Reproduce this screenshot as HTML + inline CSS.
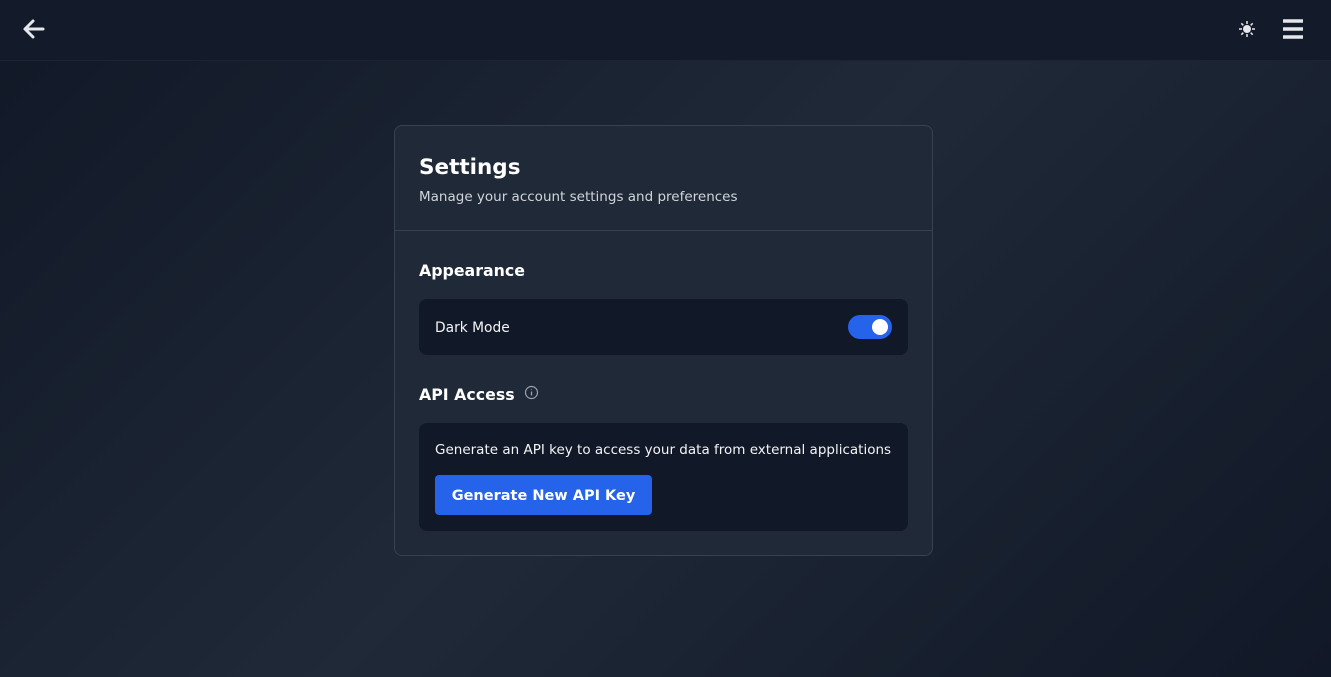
<!DOCTYPE html>
<html><head><style>
*{box-sizing:border-box;margin:0;padding:0}
body{width:1331px;height:677px;overflow:hidden;font-family:"DejaVu Sans","Liberation Sans",sans-serif;background:linear-gradient(135deg,#111827 0%,#1f2937 50%,#111827 100%);color:#f3f4f6;position:relative}
.top{position:absolute;left:0;top:0;width:1331px;height:61px;background:#131a29;border-bottom:1px solid #1c2433}
.card{position:absolute;left:394px;top:125px;width:539px;height:431px;background:#1f2937;border:1px solid #374151;border-radius:8px}
h1{position:absolute;left:24px;top:29px;font-size:21.5px;font-weight:bold;color:#fff}
.sub{position:absolute;left:24px;top:63px;font-size:13.5px;color:#d1d5db}
.hr{position:absolute;left:0;top:104px;width:100%;height:1px;background:#374151}
h2{position:absolute;left:24px;font-size:15.8px;font-weight:bold;color:#fff}
.box{position:absolute;left:24px;width:489px;background:#111827;border-radius:8px}
.tog{position:absolute;right:16px;top:16px;width:44px;height:24px;border-radius:12px;background:#2563eb}
.tog:after{content:"";position:absolute;right:4px;top:4px;width:16px;height:16px;border-radius:50%;background:#fff}
.btn{position:absolute;left:16px;top:52px;width:217px;height:40px;background:#2563eb;border-radius:4px;color:#fff;font-weight:bold;font-size:14.5px;line-height:43px;text-align:center}
</style></head><body>
<div class="top">
<svg style="position:absolute;left:22px;top:18px" width="24" height="22" viewBox="0 0 24 22"><path d="M21 11H4M11 3L3 11l8 8" stroke="#e5e7eb" stroke-width="3" fill="none" stroke-linecap="round" stroke-linejoin="round"/></svg>
<svg style="position:absolute;left:1238px;top:20px" width="18" height="18" viewBox="0 0 18 18"><circle cx="9" cy="9" r="4" fill="#e5e7eb"/><path d="M9 1v3M9 14v3M1 9h3M14 9h3M3.3 3.3l2 2M12.7 12.7l2 2M3.3 14.7l2-2M12.7 5.3l2-2" stroke="#e5e7eb" stroke-width="1.5"/></svg>
<svg style="position:absolute;left:1282px;top:18px" width="22" height="22" viewBox="0 0 22 22"><path d="M1 3h20M1 11h20M1 19h20" stroke="#e5e7eb" stroke-width="3.5"/></svg>
</div>
<div class="card">
<h1>Settings</h1>
<div class="sub">Manage your account settings and preferences</div>
<div class="hr"></div>
<h2 style="top:135px">Appearance</h2>
<div class="box" style="top:173px;height:56px"><div style="position:absolute;left:16px;top:21px;font-size:13.8px">Dark Mode</div><div class="tog"></div></div>
<h2 style="top:259px">API Access</h2>
<svg style="position:absolute;left:129px;top:259px" width="15" height="15" viewBox="0 0 15 15"><circle cx="7.5" cy="7.5" r="6" stroke="#9ca3af" stroke-width="1.2" fill="none"/><path d="M7.5 6.5v4M7.5 4.3v.6" stroke="#9ca3af" stroke-width="1.3"/></svg>
<div class="box" style="top:297px;height:108px"><div style="position:absolute;left:16px;top:19px;font-size:13.5px;white-space:nowrap">Generate an API key to access your data from external applications</div><div class="btn">Generate New API Key</div></div>
</div>
</body></html>
